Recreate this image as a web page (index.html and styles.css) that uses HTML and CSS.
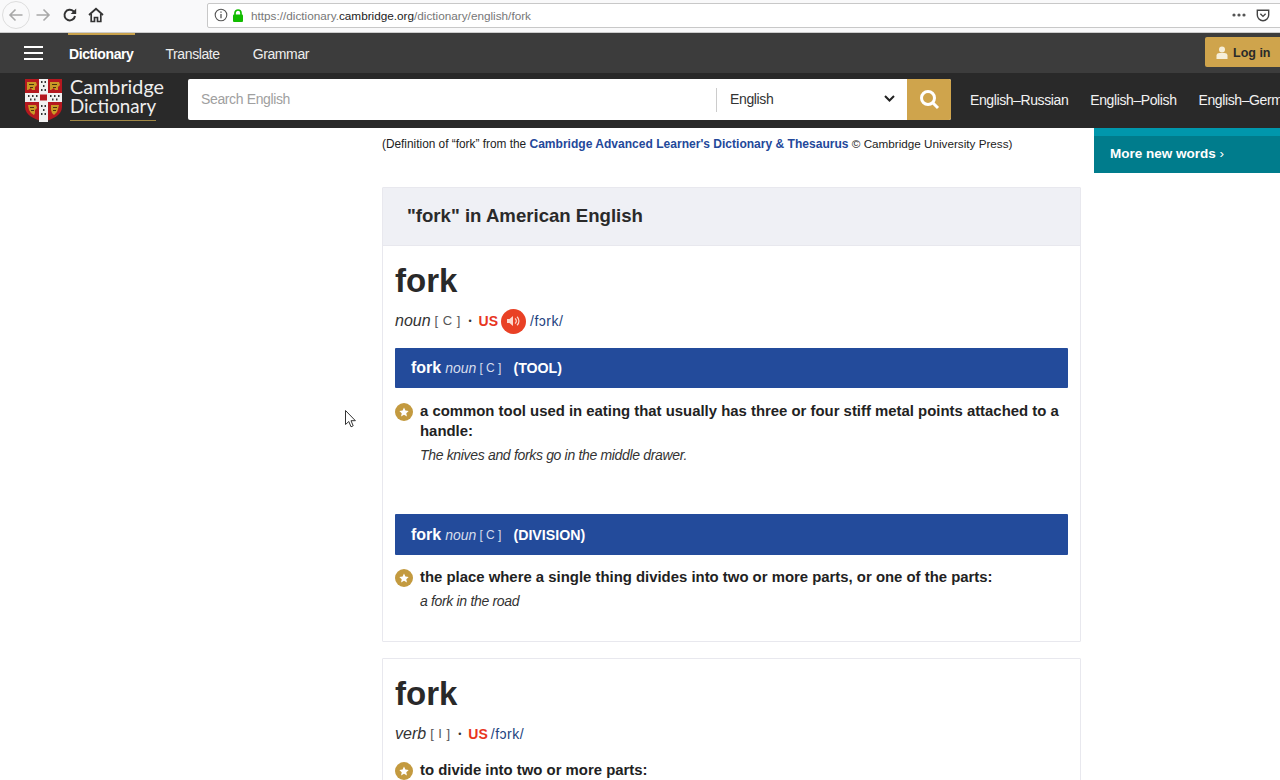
FILE: index.html
```html
<!DOCTYPE html>
<html lang="en">
<head>
<meta charset="utf-8">
<title>fork - Cambridge Dictionary</title>
<link rel="stylesheet" href="styles.css">
</head>
<body>
<div class="chrome">
  <div class="nav-buttons">
    <span class="back"><svg width="16" height="16" viewBox="0 0 16 16"><path d="M14.500 8H2M7.500 2.500 2 8l5.500 5.500" fill="none" stroke="#a8a8a8" stroke-width="1.600"/></svg></span>
    <svg class="ico fwd" width="16" height="16" viewBox="0 0 16 16"><path d="M1.500 8H14M8.500 2.500 14 8l-5.500 5.500" fill="none" stroke="#a8a8a8" stroke-width="1.600"/></svg>
    <svg class="ico reload" width="16" height="16" viewBox="0 0 16 16"><path d="M13 9a5.300 5.300 0 1 1-1.500-4.700L13.500 6" fill="none" stroke="#333" stroke-width="2"/><path d="M14.200 1.500v5.500H8.700z" fill="#333"/></svg>
    <svg class="ico home" width="16" height="16" viewBox="0 0 16 16"><path d="M1 8 8 1.800 15 8" fill="none" stroke="#333" stroke-width="1.800"/><path d="M3.200 7v7.500h3.300v-4h3v4h3.300V7" fill="none" stroke="#333" stroke-width="1.700"/></svg>
  </div>
  <div class="urlbar">
    <svg class="info" width="14" height="14" viewBox="0 0 14 14"><circle cx="7" cy="7" r="5.800" fill="none" stroke="#555" stroke-width="1.100"/><path d="M7 6v4.200M7 3.500v1.300" stroke="#555" stroke-width="1.300"/></svg>
    <svg class="lock" width="12" height="13" viewBox="0 0 12 13"><path d="M3 6V4a3 3 0 0 1 6 0v2" fill="none" stroke="#12bc00" stroke-width="1.700"/><rect x="1" y="5.500" width="10" height="7.500" rx="1" fill="#12bc00"/></svg>
    <span class="url">https://dictionary.<b>cambridge.org</b>/dictionary/english/fork</span>
    <span class="url-end">
      <svg width="14" height="4" viewBox="0 0 14 4"><g fill="#555"><circle cx="2" cy="2" r="1.600"/><circle cx="7" cy="2" r="1.600"/><circle cx="12" cy="2" r="1.600"/></g></svg>
      <svg width="14" height="13" viewBox="0 0 16 14"><path d="M1.500 1h13v5.500a6.500 6.500 0 0 1-13 0z" fill="none" stroke="#444" stroke-width="1.600"/><path d="M5 5l3 3 3-3" fill="none" stroke="#444" stroke-width="1.600"/></svg>
    </span>
  </div>
</div>
<header class="topnav">
  <div class="burger"><i></i><i></i><i></i></div>
  <a class="tab active">Dictionary</a>
  <a class="tab">Translate</a>
  <a class="tab">Grammar</a>
  <a class="login">
    <svg width="12" height="13" viewBox="0 0 12 13"><circle cx="6" cy="3.500" r="3" fill="#f6eed8"/><path d="M.5 13V9.500C.5 7.800 2 7 3.500 7h5c1.500 0 3 .8 3 2.500V13z" fill="#f6eed8"/></svg>
    Log in
  </a>
</header>
<div class="searchbar">
  <div class="logo">
    <svg class="shield" width="37" height="43" viewBox="0 0 37 43">
      <path d="M0 0h37v28c0 8-9 12-18.500 15C9 40 0 36 0 28z" fill="#b5181f"/>
      <path d="M14 0h9v43h-9zM0 14h37v9H0z" fill="#f1f1f1"/>
      <rect x="15" y="15.500" width="7" height="6" fill="#b5181f"/>
      <g fill="#c99a26">
        <path d="M2 3h9l1 3-2 2v3H7L6 9 3 11H2z"/>
        <path d="M25 3h9l1 3-2 2v3h-3l-1-2-3 2h-1z"/>
        <path d="M3 26h8l1 3-2 2v3l-1 2-3-2-2-3z"/>
        <path d="M26 26h8l-1 4-1 3-3 3-2-2-1-3z"/>
      </g>
      <g fill="#4a3410">
        <path d="M4 5h5v1H4zM5 8h3v1H5zM27 5h5v1h-5zM28 8h3v1h-3zM5 28h4v1H5zM6 31h3v1H6zM28 28h4v1h-4zM28 31h3v1h-3z"/>
      </g>
      <g fill="#333">
        <rect x="16" y="2" width="1.500" height="2"/><rect x="19.500" y="2" width="1.500" height="2"/><rect x="18" y="6" width="1.500" height="2"/>
        <rect x="16" y="10" width="1.500" height="2"/><rect x="19.500" y="10" width="1.500" height="2"/>
        <rect x="16" y="26" width="1.500" height="2"/><rect x="19.500" y="26" width="1.500" height="2"/><rect x="18" y="30" width="1.500" height="2"/>
        <rect x="16" y="34" width="1.500" height="2"/><rect x="19.500" y="34" width="1.500" height="2"/>
        <rect x="3" y="16" width="1.500" height="2"/><rect x="7" y="16" width="1.500" height="2"/><rect x="11" y="16" width="1.500" height="2"/><rect x="5" y="19.500" width="1.500" height="2"/><rect x="9" y="19.500" width="1.500" height="2"/>
        <rect x="25" y="16" width="1.500" height="2"/><rect x="29" y="16" width="1.500" height="2"/><rect x="33" y="16" width="1.500" height="2"/><rect x="27" y="19.500" width="1.500" height="2"/><rect x="31" y="19.500" width="1.500" height="2"/>
      </g>
    </svg>
    <div class="logo-text"><span>Cambridge</span><span class="logo-second">Dictionary</span></div>
  </div>
  <div class="search">
    <span class="placeholder">Search English</span>
    <span class="lang">English
      <svg width="11" height="7" viewBox="0 0 11 7"><path d="M1 1l4.500 4.500L10 1" fill="none" stroke="#222" stroke-width="2"/></svg>
    </span>
    <span class="go"><svg width="21" height="21" viewBox="0 0 21 21"><circle cx="9" cy="9" r="6.500" fill="none" stroke="#fff" stroke-width="3"/><path d="M13.500 13.500 19 19" stroke="#fff" stroke-width="3"/></svg></span>
  </div>
  <nav class="dicts">
    <a>English–Russian</a><a>English–Polish</a><a>English–German</a>
  </nav>
</div>
<main class="page">
  <div class="content">
    <p class="source">(Definition of “fork” from the <b>Cambridge Advanced Learner's Dictionary &amp; Thesaurus</b> <span class="src-tail">© Cambridge University Press)</span></p>
    <section class="panel">
      <h2 class="panel-title">"fork" in American English</h2>
      <div class="entry">
        <h1 class="hw">fork</h1>
        <div class="pos-line"><i class="pos">noun</i> <span class="gram">[ C ]</span> <span class="sep">•</span> <b class="us">US</b><span class="audio"><svg width="14" height="12" viewBox="0 0 14 12"><path d="M0 4h2.500L6 1v10L2.500 8H0z" fill="#fbd9cf"/><path d="M8 3.500a3 3 0 0 1 0 5M10 1.800a5.500 5.500 0 0 1 0 8.400" fill="none" stroke="#fbd9cf" stroke-width="1.200"/></svg></span><span class="ipa">/fɔrk/</span></div>
        <div class="sense-bar"><b class="sh">fork</b> <i class="sp">noun</i> <span class="sg">[ C ]</span><b class="guide">(TOOL)</b></div>
        <div class="def first-def"><span class="star"><svg width="10" height="10" viewBox="0 0 24 24"><path d="M12 1l3.400 7.300 7.900 1-5.800 5.500 1.500 7.900-7-3.900-7 3.900 1.500-7.900L.7 9.300l7.900-1z" fill="#fff"/></svg></span><div><b>a common tool used in eating that usually has three or four stiff metal points attached to a handle:</b><i class="eg">The knives and forks go in the middle drawer.</i></div></div>
        <div class="sense-bar second"><b class="sh">fork</b> <i class="sp">noun</i> <span class="sg">[ C ]</span><b class="guide">(DIVISION)</b></div>
        <div class="def after-second"><span class="star"><svg width="10" height="10" viewBox="0 0 24 24"><path d="M12 1l3.400 7.300 7.900 1-5.800 5.500 1.500 7.900-7-3.900-7 3.900 1.500-7.900L.7 9.300l7.900-1z" fill="#fff"/></svg></span><div><b>the place where a single thing divides into two or more parts, or one of the parts:</b><i class="eg">a fork in the road</i></div></div>
      </div>
    </section>
    <section class="panel verb">
      <div class="entry">
        <h1 class="hw">fork</h1>
        <div class="pos-line verb-line"><i class="pos">verb</i> <span class="gram">[ I ]</span> <span class="sep">•</span> <b class="us">US</b> <span class="ipa">/fɔrk/</span></div>
        <div class="def"><span class="star"><svg width="10" height="10" viewBox="0 0 24 24"><path d="M12 1l3.400 7.300 7.900 1-5.800 5.500 1.500 7.900-7-3.900-7 3.900 1.500-7.900L.7 9.300l7.900-1z" fill="#fff"/></svg></span><div><b>to divide into two or more parts:</b></div></div>
      </div>
    </section>
  </div>
  <aside class="side">
    <div class="more">More new words <span class="chev">›</span></div>
  </aside>
</main>
<svg class="cursor" width="12" height="18" viewBox="0 0 12 18"><path d="M.500.500v14l3.300-3 2.200 5.300 2.200-1-2.200-5.100h4.400z" fill="#fff" stroke="#333"/></svg>
</body>
</html>
```
FILE: styles.css
```css
* { box-sizing: border-box; }
html, body { height: 100%; }
body {
  margin: 0;
  height: 780px;
  overflow: hidden;
  position: relative;
  font-family: "Liberation Sans", Arial, sans-serif;
  color: #222;
  background: #fff;
}
.chrome {
  height: 33px;
  background: #f9f9fa;
  display: flex;
  align-items: center;
  padding: 0 0 2px 2px;
  border-bottom: 1px solid #ccc;
}
.nav-buttons { display: flex; align-items: center; width: 205px; }
.back {
  width: 28px;
  height: 28px;
  border: 1px solid #ddd;
  border-radius: 50%;
  display: flex;
  align-items: center;
  justify-content: center;
}
.fwd { margin-left: 5px; }
.reload { margin-left: 11px; }
.home { margin-left: 10px; }
.urlbar {
  flex: 1;
  height: 25px;
  background: #fff;
  border: 1px solid #c8c8c8;
  border-radius: 2px;
  margin-right: -2px;
  display: flex;
  align-items: center;
  padding-left: 6px;
  font-size: 12px;
  color: #777;
}
.lock { margin-left: 4px; }
.url { margin-left: 7px; font-size: 11.750px; }
.url b { font-weight: 400; color: #222; }
.url-end { margin-left: auto; width: 49px; display: flex; align-items: center; gap: 10px; }
.topnav {
  height: 40px;
  background: #3c3c3c;
  display: flex;
  align-items: center;
  position: relative;
}
.burger { width: 19px; margin-left: 24px; display: flex; flex-direction: column; gap: 4px; }
.burger i { display: block; height: 2px; background: #fff; }
.tab {
  align-self: stretch;
  padding-top: 1px;
  color: #eee;
  font-size: 14px;
  letter-spacing: -.4px;
  margin-right: 33px;
  line-height: 40px;
  position: relative;
}
.tab.active { color: #fff; font-weight: 700; margin-left: 26px; margin-right: 32px; }
.tab.active::before {
  content: "";
  position: absolute;
  left: -1px;
  right: -2px;
  top: 0;
  height: 2px;
  background: #c9a24c;
}
.login {
  margin-left: auto;
  margin-bottom: 2px;
  width: 75px;
  height: 30px;
  background: #cfa44c;
  border-radius: 2px 0 0 2px;
  display: flex;
  align-items: center;
  gap: 5px;
  padding: 1px 0 0 11px;
  font-size: 12.500px;
  font-weight: 700;
  color: #2a2a2a;
}
.searchbar {
  height: 55px;
  padding-bottom: 2px;
  background: #292929;
  display: flex;
  align-items: center;
  white-space: nowrap;
  overflow: hidden;
}
.logo { display: flex; align-items: center; margin-left: 25px; width: 163px; flex: none; }
.shield { flex: none; margin-top: 2px; }
.logo-text {
  margin-left: 8px;
  margin-bottom: 2px;
  display: flex;
  flex-direction: column;
  font-family: Lato, sans-serif;
  font-size: 19.800px;
  line-height: 20px;
  color: #eee;
  align-items: flex-start;
  font-weight: 400;
}
.logo-second { font-size: 18.800px; border-bottom: 1px solid #a08745; padding-bottom: 4px; }
.search {
  width: 763px;
  height: 41px;
  background: #fff;
  border-radius: 2px;
  display: flex;
  align-items: center;
  font-size: 14px;
  letter-spacing: -.37px;
  flex: none;
}
.placeholder { color: #a0a0a0; margin: 0 0 2px 13px; width: 515px; }
.lang {
  width: 191px;
  border-left: 1px solid #ccc;
  padding: 0 12px 2px 13px;
  height: 24px;
  line-height: 20px;
  color: #333;
  display: flex;
  align-items: center;
  justify-content: space-between;
}
.go {
  width: 44px;
  height: 41px;
  background: #cfa44c;
  border-radius: 0 2px 2px 0;
  display: flex;
  align-items: center;
  justify-content: center;
}
.dicts { display: flex; gap: 22px; margin-left: 19px; font-size: 14px; letter-spacing: -.4px; color: #f2f2f2; }
.page { display: flex; align-items: flex-start; }
.content { width: 699px; margin-left: 382px; }
.source { margin: 9px 0 0; font-size: 11.850px; line-height: 14px; height: 50px; color: #222; }
.source b { color: #23489a; font-size: 12.050px; }
.src-tail { font-size: 11.700px; }
.panel { border: 1px solid #e8e8ee; border-radius: 1px; }
.panel-title {
  margin: 0;
  height: 58px;
  background: #eff0f5;
  border-bottom: 1px solid #e8e8ee;
  padding-left: 24px;
  font-size: 18.600px;
  line-height: 56px;
  color: #2a2a2a;
}
.entry { padding: 0 12px; }
.hw {
  margin: 0;
  padding-top: 15px;
  font-size: 33px;
  line-height: 40px;
  color: #292929;
}
.pos-line { height: 22px; margin-top: 9px; font-size: 14px; line-height: 22px; display: flex; align-items: center; gap: 4px; color: #444; }
.pos { font-size: 16px; color: #333; }
.gram { font-size: 13px; margin-right: 2px; color: #555; word-spacing: 1px; }
.sep { font-size: 9px; margin: 0 3px 0 2px; color: #333; }
.us { color: #e8351e; font-size: 14px; margin-right: -1px; }
.audio {
  width: 25px;
  height: 25px;
  border-radius: 50%;
  background: #e94125;
  display: flex;
  align-items: center;
  justify-content: center;
}
.ipa { color: #23427e; margin-left: 0; letter-spacing: .5px; }
.sense-bar {
  height: 40px;
  background: #234b9b;
  border-radius: 1px;
  margin-top: 16px;
  padding-left: 16px;
  color: #fff;
  display: flex;
  align-items: center;
  gap: 4px;
}
.sense-bar.second { margin-top: 49px; height: 41px; }
.sh { font-size: 16px; }
.sp { font-size: 14px; color: #d6ddec; }
.sg { font-size: 12px; color: #d6ddec; margin-left: -1px; }
.guide { font-size: 14.200px; margin-left: 8px; }
.def { display: flex; margin-top: 13px; font-size: 14.900px; line-height: 20px; color: #222; }
.after-second { margin-top: 12px; }
.star {
  flex: none;
  width: 18px;
  height: 18px;
  margin: 2px 7px 0 0;
  border-radius: 50%;
  background: #c39a3f;
  display: flex;
  align-items: center;
  justify-content: center;
}
.eg { display: block; margin-top: 5px; font-size: 14px; letter-spacing: -.33px; line-height: 19px; color: #333; }
.panel:first-of-type { height: 455px; }
.verb { margin-top: 16px; height: 200px; }
.verb-line { margin-top: 9px; }
.verb .def { margin-top: 15px; }
.side { margin-left: 13px; width: 186px; flex: none; }
.more {
  height: 45px;
  background: #007c8c;
  border-top: 8px solid #0097ac;
  padding-left: 16px;
  font-size: 13.500px;
  font-weight: 700;
  line-height: 36px;
  color: #fff;
}
.chev { font-weight: 400; }
.cursor { position: absolute; left: 345px; top: 410px; }
```
